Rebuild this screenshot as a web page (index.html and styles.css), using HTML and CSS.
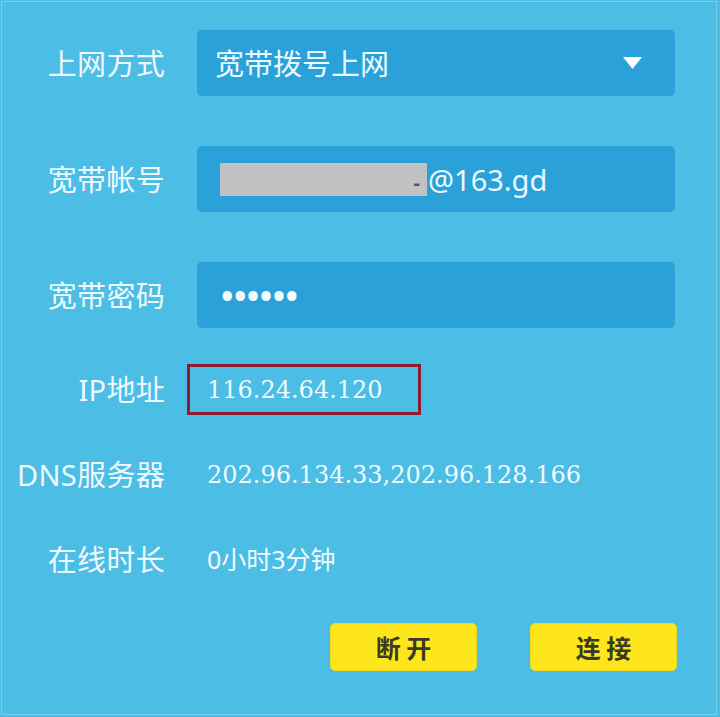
FILE: index.html
```html
<!DOCTYPE html>
<html lang="zh-CN">
<head>
<meta charset="utf-8">
<title>宽带拨号上网</title>
<link rel="stylesheet" href="styles.css">
</head>
<body>
<div class="frame">
  <div class="panel">
    <div class="form-row">
      <div class="label">上网方式</div>
      <div class="field select">
        <span class="field-text">宽带拨号上网</span>
        <svg class="caret" width="19" height="14" viewBox="0 0 19 14"><polygon points="0,1 19,1 9.5,13" fill="#ffffff"/></svg>
      </div>
    </div>
    <div class="form-row">
      <div class="label">宽带帐号</div>
      <div class="field account">
        <span class="mask"><span class="mask-dash">-</span></span><span class="field-text">@163.gd</span>
      </div>
    </div>
    <div class="form-row">
      <div class="label">宽带密码</div>
      <div class="field password">
        <span class="dots">••••••</span>
      </div>
    </div>
    <div class="info-row">
      <div class="label">IP地址</div>
      <div class="ip-box"><span class="serif-value">116.24.64.120</span></div>
    </div>
    <div class="info-row">
      <div class="label">DNS服务器</div>
      <div class="info-value"><span class="serif-value">202.96.134.33,202.96.128.166</span></div>
    </div>
    <div class="info-row">
      <div class="label">在线时长</div>
      <div class="info-value"><span class="time-value">0小时3分钟</span></div>
    </div>
    <div class="actions">
      <button class="btn">断 开</button>
      <button class="btn">连 接</button>
    </div>
  </div>
</div>
</body>
</html>
```

FILE: styles.css
```css
html, body {
  margin: 0;
  padding: 0;
  background: #4bbce3;
}

.frame {
  width: 720px;
  height: 717px;
  box-sizing: border-box;
  padding: 1px 3px 2px 1px;
  background: #4cbde4;
}

.panel {
  height: 100%;
  box-sizing: border-box;
  border: 1px solid #7ccdec;
  padding-top: 28px;
  font-family: "Noto Sans", "Noto Sans CJK SC", sans-serif;
  color: #eef9fe;
}

.form-row {
  display: grid;
  grid-template-columns: 163px 478px;
  column-gap: 32px;
  align-items: center;
  height: 66px;
  margin-bottom: 50px;
}

.form-row:nth-child(3) {
  margin-bottom: 36px;
}

.label {
  text-align: right;
  font-size: 29px;
  letter-spacing: 0.3px;
  line-height: 1;
  white-space: nowrap;
  color: #eef9fe;
}

.field {
  height: 66px;
  box-sizing: border-box;
  background: #2aa1d9;
  border-radius: 5px;
  display: flex;
  align-items: center;
}

.field-text {
  font-size: 29px;
  line-height: 1;
  color: #eafaff;
}

.select {
  padding: 0 33px 0 18px;
  justify-content: space-between;
}

.caret {
  display: block;
}

.account {
  padding-left: 23px;
}

.mask {
  width: 207px;
  height: 33px;
  background: #c2c2c4;
  display: flex;
  align-items: center;
  justify-content: flex-end;
  padding-right: 7px;
  box-sizing: border-box;
  margin-right: 1px;
}

.mask-dash {
  font-size: 20px;
  font-weight: 700;
  color: #55585c;
  line-height: 1;
  margin-top: 8px;
}

.password {
  padding-left: 24px;
}

.dots {
  font-size: 33px;
  font-weight: 700;
  letter-spacing: 0.5px;
  line-height: 1;
  color: #f4fbff;
}

.info-row {
  display: grid;
  grid-template-columns: 163px auto;
  column-gap: 22px;
  justify-content: start;
  align-items: center;
  height: 51px;
  margin-bottom: 34px;
}

.ip-box {
  width: 234px;
  height: 51px;
  box-sizing: border-box;
  border: 3px solid #8d1c2e;
  padding-left: 17px;
  display: flex;
  align-items: center;
}

.info-value {
  padding-left: 20px;
  display: flex;
  align-items: center;
}

.serif-value {
  font-family: "DejaVu Serif", "Liberation Serif", serif;
  font-size: 24px;
  line-height: 1;
  color: #effbff;
  white-space: nowrap;
}

.time-value {
  font-size: 25px;
  line-height: 1;
  color: #effbff;
  white-space: nowrap;
}

.actions {
  display: flex;
  gap: 53px;
  padding-left: 328px;
  margin-top: 38px;
}

.btn {
  width: 147px;
  height: 48px;
  border: 1px solid #f2d81a;
  border-radius: 5px;
  background: #fee61d;
  font-family: "Noto Sans CJK SC", sans-serif;
  font-size: 25px;
  font-weight: 700;
  color: #3a3a22;
  padding: 0;
  line-height: 1;
}
```
